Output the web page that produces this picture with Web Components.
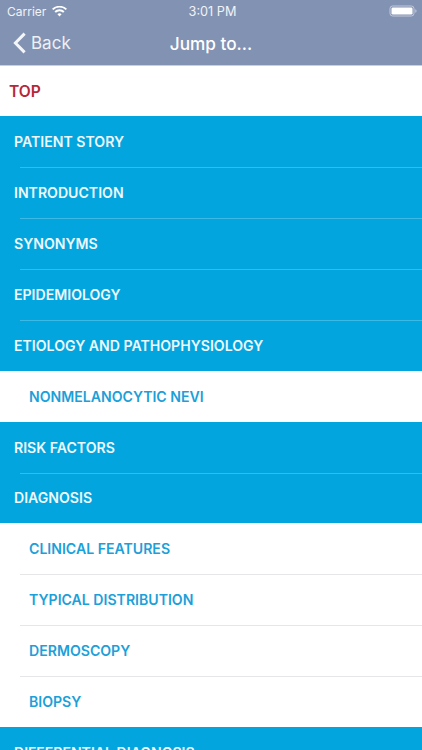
<!DOCTYPE html>
<html><head><meta charset="utf-8">
<style>
html,body{margin:0;padding:0;height:750px;overflow:hidden;background:#fff}
body{font-family:Inter,"Liberation Sans",sans-serif}
</style></head>
<body>
<app-nav></app-nav>
<jump-list>
<jump-row kind="top">TOP</jump-row>
<jump-row kind="main" sep>PATIENT STORY</jump-row>
<jump-row kind="main" sep>INTRODUCTION</jump-row>
<jump-row kind="main" sep>SYNONYMS</jump-row>
<jump-row kind="main" sep>EPIDEMIOLOGY</jump-row>
<jump-row kind="main">ETIOLOGY AND PATHOPHYSIOLOGY</jump-row>
<jump-row kind="sub">NONMELANOCYTIC NEVI</jump-row>
<jump-row kind="main" sep>RISK FACTORS</jump-row>
<jump-row kind="main">DIAGNOSIS</jump-row>
<jump-row kind="sub" sep>CLINICAL FEATURES</jump-row>
<jump-row kind="sub" sep>TYPICAL DISTRIBUTION</jump-row>
<jump-row kind="sub" sep>DERMOSCOPY</jump-row>
<jump-row kind="sub">BIOPSY</jump-row>
<jump-row kind="main">DIFFERENTIAL DIAGNOSIS</jump-row>
</jump-list>
<script>
class AppNav extends HTMLElement{constructor(){super();this.attachShadow({mode:'open'}).innerHTML=`
<style>
:host{display:block;height:65px;background:#8292b2;color:#fff;border-bottom:1px solid #c9cfdd;box-sizing:content-box;font-family:Inter,"Liberation Sans",sans-serif}
.status{height:22px;display:grid;grid-template-columns:1fr auto 1fr;align-items:center;padding:0 5px 0 7px;font-size:12.7px;color:#f1f3f7}
.status>.t{margin-left:1px}
.l{display:flex;align-items:center;gap:6px;font-size:12px}
.r{display:flex;justify-content:flex-end}
.bar{height:42px;display:grid;grid-template-columns:1fr auto 1fr;align-items:center;font-size:17.2px}
.back{display:flex;align-items:center;gap:5px;color:#eef0f5;padding-left:13px;font-size:17px}
.title{font-weight:500}
</style>
<div class="status">
<div class="l"><span>Carrier</span>
<svg width="15" height="11" viewBox="0 0 15 11"><path d="M7.5 10.6 5.4 8.3a3 3 0 0 1 4.2 0zM3.8 6.7 2.5 5.3a7.2 7.2 0 0 1 10 0l-1.3 1.4a5.3 5.3 0 0 0-7.4 0zM1.3 4.1 0 2.8a10.9 10.9 0 0 1 15 0l-1.3 1.3a9 9 0 0 0-12.4 0z" fill="#fff"/></svg></div>
<div class="t">3:01 PM</div>
<div class="r"><svg width="28" height="12" viewBox="0 0 28 12"><rect x="1" y="1" width="24" height="10" rx="2.6" fill="none" stroke="#c3cada" stroke-width="1"/><rect x="2.5" y="2.5" width="21" height="7" rx="1.3" fill="#fff"/><path d="M26.3 4.2c.8.2 1.2.8 1.2 1.8s-.4 1.6-1.2 1.8z" fill="#c3cada"/></svg></div>
</div>
<div class="bar">
<div class="back"><svg width="13" height="22" viewBox="0 0 13 22"><path d="M11.6 1.6 2.4 11l9.2 9.4" fill="none" stroke="#f4f5f8" stroke-width="3"/></svg><span>Back</span></div>
<div class="title">Jump to...</div><div></div>
</div>`}}
class JumpList extends HTMLElement{constructor(){super();this.attachShadow({mode:'open'}).innerHTML=`
<style>:host{display:flex;flex-direction:column}</style><slot></slot>`}}
class JumpRow extends HTMLElement{constructor(){super();this.attachShadow({mode:'open'}).innerHTML=`
<style>
:host{display:flex;align-items:center;box-sizing:border-box;height:50.9px;flex:none;position:relative;font-family:Inter,"Liberation Sans",sans-serif;font-size:14.1px;font-weight:600;letter-spacing:0}
:host([kind=top]){background:#fff;color:#b5283a;padding-left:9px;font-size:15.6px;height:50.3px}
:host([kind=main]){background:#03a5de;color:#eef8fc;padding-left:14px}
:host([kind=sub]){background:#fff;color:#1ba0d9;padding-left:29px}
:host([sep])::after{content:"";position:absolute;z-index:1;left:20px;right:0;bottom:-1px;height:1px}
:host([sep][kind=main])::after{background:#3db9e6}
:host([sep][kind=sub])::after{background:#e6e6e8}
</style><slot></slot>`}}
customElements.define('app-nav',AppNav);
customElements.define('jump-list',JumpList);
customElements.define('jump-row',JumpRow);
</script>
</body></html>
